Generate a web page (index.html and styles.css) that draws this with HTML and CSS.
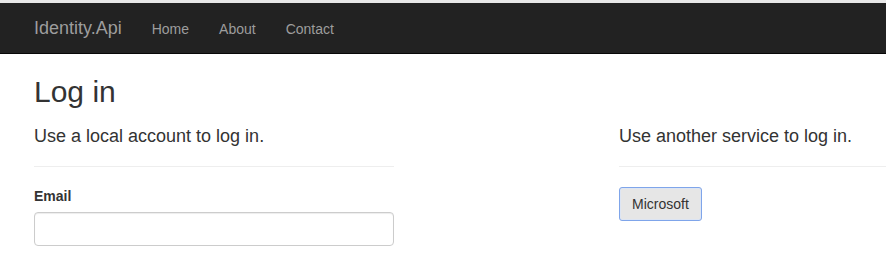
FILE: index.html
```html
<!DOCTYPE html>
<html lang="en">
<head>
<meta charset="utf-8">
<title>Log in - Identity.Api</title>
<link rel="stylesheet" href="styles.css">
</head>
<body>
<div class="topstrip"></div>
<nav class="navbar">
  <div class="nav-inner">
    <a class="brand" href="#">Identity.Api</a>
    <ul class="nav-links">
      <li><a href="#">Home</a></li>
      <li><a href="#">About</a></li>
      <li><a href="#">Contact</a></li>
    </ul>
  </div>
</nav>
<main class="container">
  <h2 class="title">Log in</h2>
  <div class="row">
    <section class="col-local">
      <h4 class="sub">Use a local account to log in.</h4>
      <hr class="rule">
      <div class="form-group">
        <label class="label" for="email">Email</label>
        <input class="form-control" id="email" type="email">
      </div>
    </section>
    <section class="col-external">
      <h4 class="sub">Use another service to log in.</h4>
      <hr class="rule">
      <button class="btn" type="button">Microsoft</button>
    </section>
  </div>
</main>
</body>
</html>
```
FILE: styles.css
```css
html, body {
  margin: 0;
  padding: 0;
}
body {
  font-family: "Liberation Sans", Arial, Helvetica, sans-serif;
  font-size: 14px;
  line-height: 1.42857;
  color: #333;
  background: #fff;
  overflow: hidden;
}
.topstrip {
  height: 3px;
  background: #e8e8e8;
}
.navbar {
  height: 50px;
  background: #222;
  border-bottom: 1px solid #080808;
}
.nav-inner {
  display: flex;
  align-items: flex-start;
  padding-left: 19px;
}
.brand {
  display: block;
  padding: 15px;
  font-size: 18px;
  line-height: 20px;
  color: #9d9d9d;
  text-decoration: none;
}
.nav-links {
  display: flex;
  list-style: none;
  margin: 0;
  padding: 0;
}
.nav-links a {
  display: block;
  padding: 16px 15px 14px;
  line-height: 20px;
  color: #9d9d9d;
  text-decoration: none;
}
.container {
  margin-left: 19px;
  padding: 0 0 0 15px;
}
.title {
  margin: 21px 0 0;
  font-size: 30px;
  line-height: 33px;
  font-weight: 500;
  color: #333;
}
.row {
  display: flex;
  margin-left: -15px;
}
.col-local {
  width: 390px;
  flex: none;
  padding: 0 15px;
  box-sizing: border-box;
}
.col-external {
  flex: 1;
  min-width: 0;
  margin-left: 195px;
  padding-left: 15px;
}
.sub {
  margin: 18px 0 0;
  font-size: 18px;
  line-height: 20px;
  font-weight: 500;
}
.rule {
  margin: 20px 0;
  border: 0;
  border-top: 1px solid #eee;
}
.form-group {
  margin-bottom: 15px;
}
.label {
  display: block;
  font-weight: bold;
  margin-bottom: 5px;
}
.form-control {
  display: block;
  width: 100%;
  height: 34px;
  box-sizing: border-box;
  padding: 6px 12px;
  font: inherit;
  color: #555;
  background: #fff;
  border: 1px solid #ccc;
  border-radius: 4px;
  box-shadow: inset 0 1px 1px rgba(0,0,0,.075);
}
.btn {
  display: inline-block;
  height: 34px;
  padding: 6px 12px;
  font: inherit;
  line-height: 20px;
  color: #333;
  background: #e6e6e6;
  border: 1px solid #7fa5ea;
  border-radius: 3px;
  box-shadow: inset 0 0 0 1px #dde5f3;
}
```
